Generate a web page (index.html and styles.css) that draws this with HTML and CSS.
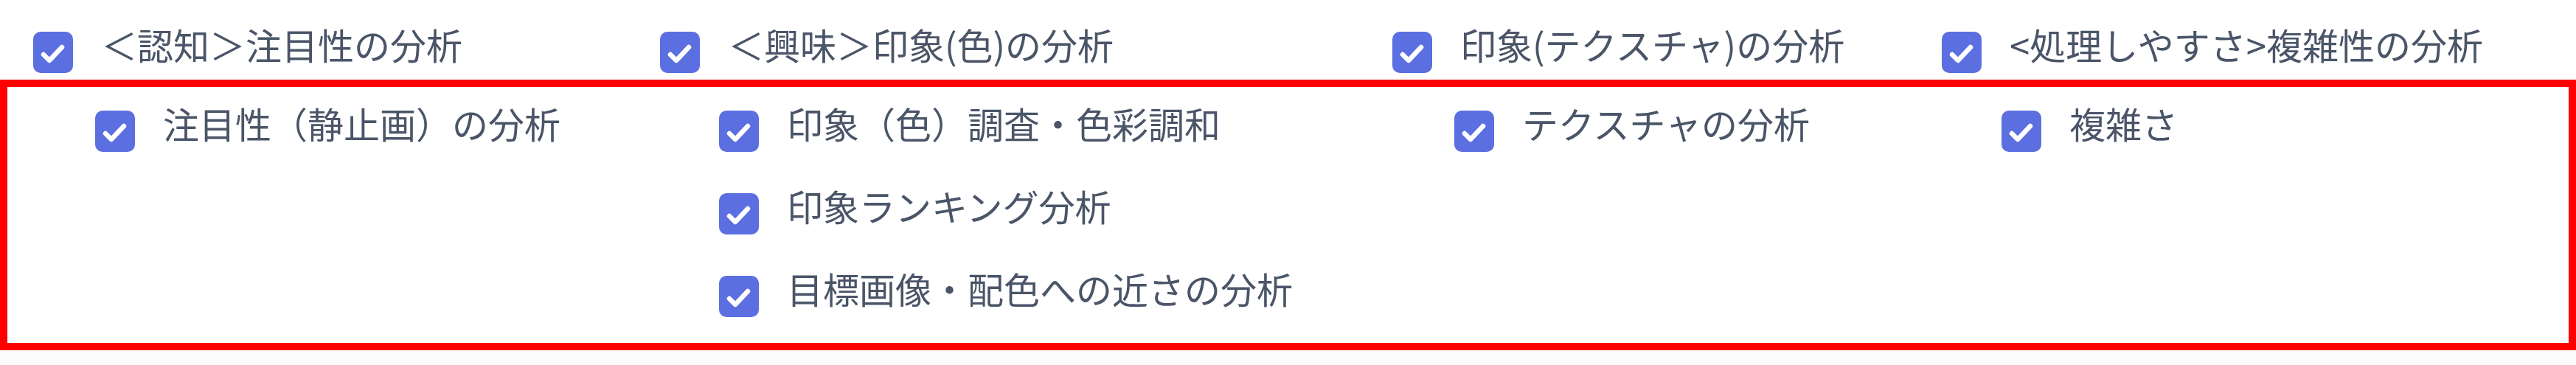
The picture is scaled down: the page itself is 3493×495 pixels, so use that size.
FILE: index.html
```html
<!DOCTYPE html>
<html lang="ja">
<head>
<meta charset="utf-8">
<title>分析項目</title>
<link rel="stylesheet" href="styles.css">
</head>
<body>
<div class="page">
  <div class="top-row">
    <label class="item"><span class="cb"><svg viewBox="0 0 54 56"><path d="M14 31 L22 39 L39 21" /></svg></span><span class="label">＜認知＞注目性の分析</span></label>
    <label class="item"><span class="cb"><svg viewBox="0 0 54 56"><path d="M14 31 L22 39 L39 21" /></svg></span><span class="label">＜興味＞印象(色)の分析</span></label>
    <label class="item"><span class="cb"><svg viewBox="0 0 54 56"><path d="M14 31 L22 39 L39 21" /></svg></span><span class="label">印象(テクスチャ)の分析</span></label>
    <label class="item"><span class="cb"><svg viewBox="0 0 54 56"><path d="M14 31 L22 39 L39 21" /></svg></span><span class="label">&lt;処理しやすさ&gt;複雑性の分析</span></label>
  </div>
  <div class="box">
    <div class="col">
      <label class="item"><span class="cb"><svg viewBox="0 0 54 56"><path d="M14 31 L22 39 L39 21" /></svg></span><span class="label">注目性（静止画）の分析</span></label>
    </div>
    <div class="col">
      <label class="item"><span class="cb"><svg viewBox="0 0 54 56"><path d="M14 31 L22 39 L39 21" /></svg></span><span class="label">印象（色）調査・色彩調和</span></label>
      <label class="item"><span class="cb"><svg viewBox="0 0 54 56"><path d="M14 31 L22 39 L39 21" /></svg></span><span class="label">印象ランキング分析</span></label>
      <label class="item"><span class="cb"><svg viewBox="0 0 54 56"><path d="M14 31 L22 39 L39 21" /></svg></span><span class="label">目標画像・配色への近さの分析</span></label>
    </div>
    <div class="col">
      <label class="item"><span class="cb"><svg viewBox="0 0 54 56"><path d="M14 31 L22 39 L39 21" /></svg></span><span class="label">テクスチャの分析</span></label>
    </div>
    <div class="col">
      <label class="item"><span class="cb"><svg viewBox="0 0 54 56"><path d="M14 31 L22 39 L39 21" /></svg></span><span class="label">複雑さ</span></label>
    </div>
  </div>
</div>
</body>
</html>
```
FILE: styles.css
```css
html {
  background: #fcfcfc;
}
body {
  margin: 0;
  width: 3493px;
  height: 495px;
  overflow: hidden;
  font-family: "Noto Sans CJK JP", "Noto Sans", sans-serif;
  color: #4a5568;
}
.page {
  background: #ffffff;
  padding-top: 35px;
}
.top-row {
  display: grid;
  grid-template-columns: 850px 993px 745px auto;
  padding-left: 45px;
  margin-bottom: 9px;
}
.box {
  border: 10px solid #ff0000;
  display: grid;
  grid-template-columns: 846px 997px 742px auto;
  padding: 24px 0 35px 119px;
  background: #ffffff;
}
.col {
  display: flex;
  flex-direction: column;
  gap: 48px;
}
.item {
  display: flex;
  align-items: flex-start;
  gap: 38px;
  height: 64px;
}
.cb {
  flex: none;
  width: 54px;
  height: 56px;
  margin-top: 8px;
  border-radius: 10px;
  background: #5b6fe0;
  display: block;
}
.cb svg {
  display: block;
  width: 54px;
  height: 56px;
}
.cb path {
  fill: none;
  stroke: #ffffff;
  stroke-width: 6.5;
  stroke-linecap: round;
  stroke-linejoin: round;
}
.label {
  font-size: 49px;
  line-height: 49px;
  white-space: nowrap;
}
```
